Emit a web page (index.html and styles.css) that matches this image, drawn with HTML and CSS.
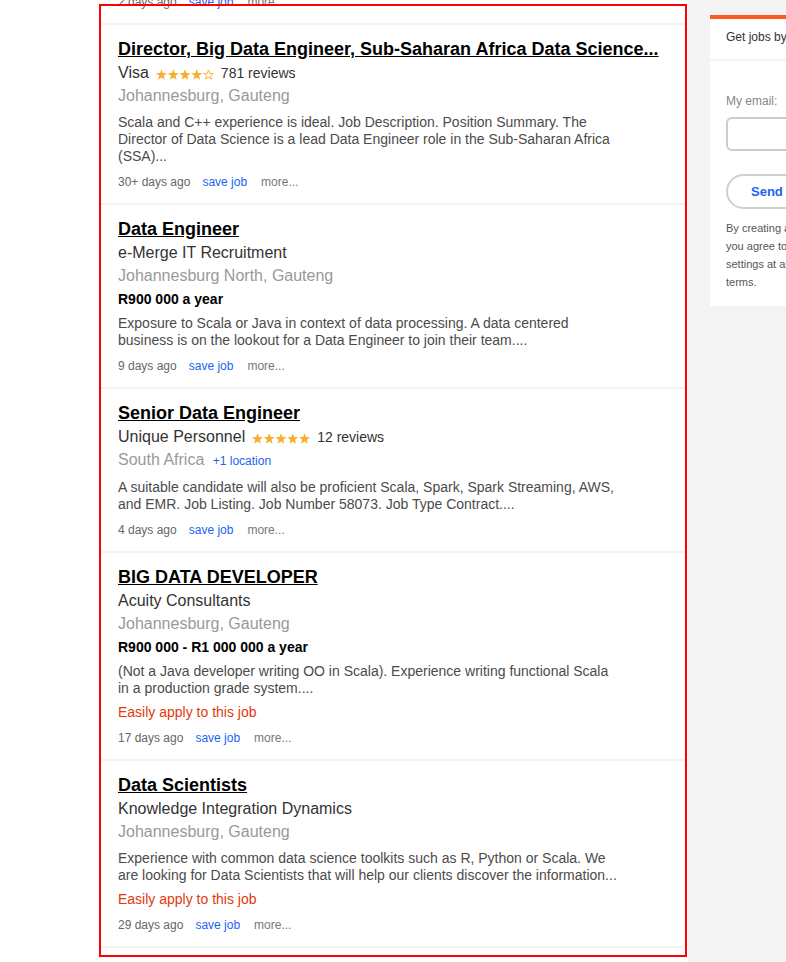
FILE: index.html
```html
<!DOCTYPE html>
<html lang="en">
<head>
<meta charset="utf-8">
<title>Jobs</title>
<link rel="stylesheet" href="styles.css">
</head>
<body>
<div class="page">
  <main class="results">
    <div class="list">
      <div class="card card-partial">
        <div class="meta"><span class="date">2 days ago</span><a class="save">save job</a><a class="more">more...</a></div>
      </div>

      <div class="card">
        <a class="title">Director, Big Data Engineer, Sub-Saharan Africa Data Science...</a>
        <div class="company">Visa
          <svg class="stars" width="58" height="11" viewBox="0 0 58 11" aria-hidden="true">
            <polygon class="s" points="5.5,0.2 6.91,4.06 11,4.21 7.78,6.74 8.91,10.7 5.5,8.4 2.09,10.7 3.22,6.74 0,4.21 4.09,4.06"/>
            <polygon class="s" transform="translate(11.75 0)" points="5.5,0.2 6.91,4.06 11,4.21 7.78,6.74 8.91,10.7 5.5,8.4 2.09,10.7 3.22,6.74 0,4.21 4.09,4.06"/>
            <polygon class="s" transform="translate(23.5 0)" points="5.5,0.2 6.91,4.06 11,4.21 7.78,6.74 8.91,10.7 5.5,8.4 2.09,10.7 3.22,6.74 0,4.21 4.09,4.06"/>
            <polygon class="s" transform="translate(35.25 0)" points="5.5,0.2 6.91,4.06 11,4.21 7.78,6.74 8.91,10.7 5.5,8.4 2.09,10.7 3.22,6.74 0,4.21 4.09,4.06"/>
            <polygon class="s-empty" transform="translate(47 0)" points="5.5,0.9 6.75,4.4 10.3,4.5 7.45,6.8 8.45,10.1 5.5,8.2 2.55,10.1 3.55,6.8 0.7,4.5 4.25,4.4"/>
          </svg>
          <span class="reviews">781 reviews</span>
        </div>
        <div class="location">Johannesburg, Gauteng</div>
        <div class="snippet">Scala and C++ experience is ideal. Job Description. Position Summary. The<br>Director of Data Science is a lead Data Engineer role in the Sub-Saharan Africa<br>(SSA)...</div>
        <div class="meta"><span class="date">30+ days ago</span><a class="save">save job</a><a class="more">more...</a></div>
      </div>

      <div class="card">
        <a class="title">Data Engineer</a>
        <div class="company">e-Merge IT Recruitment</div>
        <div class="location">Johannesburg North, Gauteng</div>
        <div class="salary">R900 000 a year</div>
        <div class="snippet">Exposure to Scala or Java in context of data processing. A data centered<br>business is on the lookout for a Data Engineer to join their team....</div>
        <div class="meta"><span class="date">9 days ago</span><a class="save">save job</a><a class="more">more...</a></div>
      </div>

      <div class="card">
        <a class="title">Senior Data Engineer</a>
        <div class="company">Unique Personnel
          <svg class="stars" width="58" height="11" viewBox="0 0 58 11" aria-hidden="true">
            <polygon class="s" points="5.5,0.2 6.91,4.06 11,4.21 7.78,6.74 8.91,10.7 5.5,8.4 2.09,10.7 3.22,6.74 0,4.21 4.09,4.06"/>
            <polygon class="s" transform="translate(11.75 0)" points="5.5,0.2 6.91,4.06 11,4.21 7.78,6.74 8.91,10.7 5.5,8.4 2.09,10.7 3.22,6.74 0,4.21 4.09,4.06"/>
            <polygon class="s" transform="translate(23.5 0)" points="5.5,0.2 6.91,4.06 11,4.21 7.78,6.74 8.91,10.7 5.5,8.4 2.09,10.7 3.22,6.74 0,4.21 4.09,4.06"/>
            <polygon class="s" transform="translate(35.25 0)" points="5.5,0.2 6.91,4.06 11,4.21 7.78,6.74 8.91,10.7 5.5,8.4 2.09,10.7 3.22,6.74 0,4.21 4.09,4.06"/>
            <polygon class="s" transform="translate(47 0)" points="5.5,0.2 6.91,4.06 11,4.21 7.78,6.74 8.91,10.7 5.5,8.4 2.09,10.7 3.22,6.74 0,4.21 4.09,4.06"/>
          </svg>
          <span class="reviews">12 reviews</span>
        </div>
        <div class="location">South Africa <a class="more-loc">+1 location</a></div>
        <div class="snippet">A suitable candidate will also be proficient Scala, Spark, Spark Streaming, AWS,<br>and EMR. Job Listing. Job Number 58073. Job Type Contract....</div>
        <div class="meta"><span class="date">4 days ago</span><a class="save">save job</a><a class="more">more...</a></div>
      </div>

      <div class="card">
        <a class="title">BIG DATA DEVELOPER</a>
        <div class="company">Acuity Consultants</div>
        <div class="location">Johannesburg, Gauteng</div>
        <div class="salary">R900 000 - R1 000 000 a year</div>
        <div class="snippet">(Not a Java developer writing OO in Scala). Experience writing functional Scala<br>in a production grade system....</div>
        <div class="easy">Easily apply to this job</div>
        <div class="meta"><span class="date">17 days ago</span><a class="save">save job</a><a class="more">more...</a></div>
      </div>

      <div class="card">
        <a class="title">Data Scientists</a>
        <div class="company">Knowledge Integration Dynamics</div>
        <div class="location">Johannesburg, Gauteng</div>
        <div class="snippet">Experience with common data science toolkits such as R, Python or Scala. We<br>are looking for Data Scientists that will help our clients discover the information...</div>
        <div class="easy">Easily apply to this job</div>
        <div class="meta"><span class="date">29 days ago</span><a class="save">save job</a><a class="more">more...</a></div>
      </div>
    </div>
    <div class="highlight"></div>
  </main>

  <aside class="sidebar">
    <div class="alert">
      <div class="alert-head">Get jobs by email for this search</div>
      <div class="alert-body">
        <label class="label">My email:</label>
        <div class="input"></div>
        <button class="send">Send me jobs</button>
        <p class="legal">By creating a job alert,<br>you agree to our Terms. You can change your consent<br>settings at any time by unsubscribing or as detailed in our<br>terms.</p>
      </div>
    </div>
  </aside>
</div>
</body>
</html>
```

FILE: styles.css
```css
html, body {
  margin: 0;
  padding: 0;
  height: 100%;
  overflow: hidden;
}

body {
  font-family: "Liberation Sans", Arial, sans-serif;
  background: #ffffff;
  color: #333;
}

.page {
  display: flex;
  min-height: 100vh;
}

.results {
  position: relative;
  flex: none;
  width: 688px;
  background: #ffffff;
}

.list {
  margin: -7px 0 0 100px;
  width: 586px;
}

.card {
  padding: 12px 18px 12px;
  border-bottom: 2px solid #f3f3f3;
}

.card-partial {
  padding-top: 0;
}

.card-partial .meta {
  margin-top: 0;
}

.title {
  display: block;
  font-size: 18px;
  line-height: 24px;
  font-weight: bold;
  color: #000;
  text-decoration: underline;
  white-space: nowrap;
}

.company {
  display: flex;
  align-items: center;
  font-size: 16px;
  line-height: 24px;
  color: #333;
}

.stars {
  margin: 0 7px 0 7px;
  position: relative;
  top: 1px;
}

.s {
  fill: #f9ae2f;
}

.s-empty {
  fill: none;
  stroke: #f9ae2f;
  stroke-width: 0.9;
}

.reviews {
  font-size: 14px;
  color: #333;
}

.location {
  font-size: 16px;
  line-height: 22px;
  color: #999;
}

.more-loc {
  font-size: 12px;
  color: #2164f3;
  margin-left: 4px;
}

.salary {
  margin-top: 3px;
  font-size: 14px;
  line-height: 18px;
  font-weight: bold;
  color: #000;
}

.snippet {
  margin-top: 7px;
  font-size: 14px;
  line-height: 17px;
  color: #4b4b4b;
}

.easy {
  margin-top: 6px;
  font-size: 14px;
  line-height: 18px;
  color: #e03a0d;
}

.meta {
  display: flex;
  margin-top: 8px;
  font-size: 12px;
  line-height: 18px;
  color: #666;
}

.save {
  margin-left: 12px;
  color: #2164f3;
}

.more {
  margin-left: 14px;
  color: #777;
}

.highlight {
  position: absolute;
  left: 99px;
  top: 4px;
  width: 588px;
  height: 953px;
  box-sizing: border-box;
  border: 2px solid #ff0000;
  pointer-events: none;
}

.sidebar {
  flex: 1;
  background: #f4f4f4;
  padding: 15px 0 0 22px;
  overflow: hidden;
}

.alert {
  width: 300px;
  background: #fff;
  border-top: 4px solid #ff5a1f;
}

.alert-head {
  padding: 9px 16px 13px;
  font-size: 12px;
  line-height: 18px;
  color: #333;
  white-space: nowrap;
  border-bottom: 2px solid #f3f3f3;
}

.alert-body {
  padding: 31px 16px 15px;
}

.label {
  display: block;
  font-size: 12px;
  line-height: 18px;
  color: #888;
}

.input {
  margin-top: 7px;
  height: 30px;
  width: 260px;
  border: 2px solid #cccccc;
  border-radius: 6px;
}

.send {
  margin-top: 23px;
  height: 35px;
  padding: 0 23px;
  border: 2px solid #d0d0d0;
  border-radius: 18px;
  background: #fff;
  font-family: "Liberation Sans", Arial, sans-serif;
  font-size: 13px;
  font-weight: bold;
  color: #2164f3;
  display: block;
}

.legal {
  margin: 10px 0 0;
  font-size: 11px;
  line-height: 18px;
  color: #555;
  white-space: nowrap;
}
```
